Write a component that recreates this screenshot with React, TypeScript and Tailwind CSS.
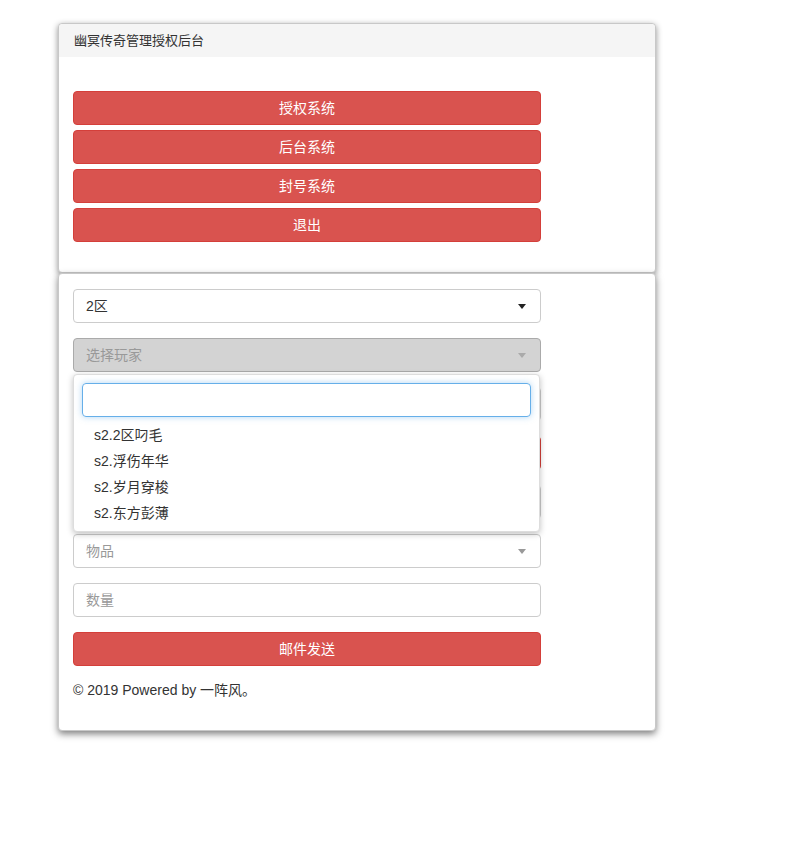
import { useState } from "react";

// component: 管理后台面板 //
const App = () => {
    const [keyword, setKeyword] = useState("");

    const menus = ["授权系统", "后台系统", "封号系统", "退出"];
    const players = ["s2.2区叼毛", "s2.浮伤年华", "s2.岁月穿梭", "s2.东方彭薄"];

    const font = { fontFamily: '"Liberation Sans", "Noto Sans CJK SC", sans-serif' };

    return (
        <div className="min-h-screen bg-white text-[14px] text-[#333]" style={font}>
            <div className="ml-[58px] pt-[23px] w-[598px]">
                {/* 상단 카드 */}
                <div className="rounded-[4px] border border-[#c8c8c8] bg-white shadow-[0_2px_6px_rgba(0,0,0,0.45)]">
                    <div className="h-[33px] flex items-center px-[15px] bg-[#f5f5f5] rounded-t-[4px] text-[13px]">
                        幽冥传奇管理授权后台
                    </div>
                    <div className="px-[14px] pt-[34px] pb-[30px] flex flex-col gap-[5px]">
                        {menus.map((m) => (
                            <button
                                key={m}
                                className="w-[468px] h-[34px] rounded-[4px] bg-[#d9534f] border border-[#d43f3a] text-white text-[14px]"
                            >
                                {m}
                            </button>
                        ))}
                    </div>
                </div>

                {/* 하단 카드 */}
                <div className="rounded-[4px] border border-[#c8c8c8] bg-white shadow-[0_3px_7px_rgba(0,0,0,0.5)]">
                    <div className="px-[14px] pt-[15px] pb-[29px] flex flex-col gap-[15px] w-[496px]">
                        <div className="h-[34px] rounded-[4px] border border-[#ccc] flex items-center justify-between pl-[12px] pr-[14px]">
                            <span>2区</span>
                            <span className="w-0 h-0 border-l-[4px] border-r-[4px] border-t-[5px] border-l-transparent border-r-transparent border-t-[#222]" />
                        </div>

                        <div className="relative">
                            <div className="h-[34px] rounded-[4px] border border-[#aaa] bg-[#d3d3d3] flex items-center justify-between pl-[12px] pr-[14px] text-[#999]">
                                <span>选择玩家</span>
                                <span className="w-0 h-0 border-l-[4px] border-r-[4px] border-t-[5px] border-l-transparent border-r-transparent border-t-[#aaa]" />
                            </div>
                            <div className="absolute left-0 top-[36px] w-[467px] z-10 bg-white border border-[#ddd] rounded-[4px] shadow-[0_2px_6px_rgba(0,0,0,0.25)] pt-[8px] pb-[5px]">
                                <div className="px-[8px]">
                                    <input
                                        value={keyword}
                                        onChange={(e) => setKeyword(e.target.value)}
                                        className="w-full h-[34px] rounded-[4px] border border-[#66afe9] outline-none shadow-[0_0_6px_rgba(102,175,233,0.5)] px-[8px]"
                                    />
                                </div>
                                <ul className="mt-[5px]">
                                    {players.map((p) => (
                                        <li key={p} className="h-[26px] flex items-center pl-[20px] text-[#333]">
                                            {p}
                                        </li>
                                    ))}
                                </ul>
                            </div>
                        </div>

                        <input className="h-[34px] rounded-[4px] border border-[#ccc] px-[12px]" />
                        <button className="h-[34px] rounded-[4px] bg-[#d9534f] border border-[#d43f3a] text-white">
                            查询
                        </button>
                        <input className="h-[34px] rounded-[4px] border border-[#ccc] px-[12px]" />

                        <div className="h-[34px] rounded-[4px] border border-[#ccc] flex items-center justify-between pl-[12px] pr-[14px] text-[#999]">
                            <span>物品</span>
                            <span className="w-0 h-0 border-l-[4px] border-r-[4px] border-t-[5px] border-l-transparent border-r-transparent border-t-[#999]" />
                        </div>

                        <input
                            placeholder="数量"
                            className="h-[34px] rounded-[4px] border border-[#ccc] px-[12px] placeholder:text-[#999] outline-none"
                        />

                        <button className="h-[34px] rounded-[4px] bg-[#d9534f] border border-[#d43f3a] text-white">
                            邮件发送
                        </button>

                        <p className="mt-[-1px]">© 2019 Powered by 一阵风。</p>
                    </div>
                </div>
            </div>
        </div>
    );
};

export default App;
